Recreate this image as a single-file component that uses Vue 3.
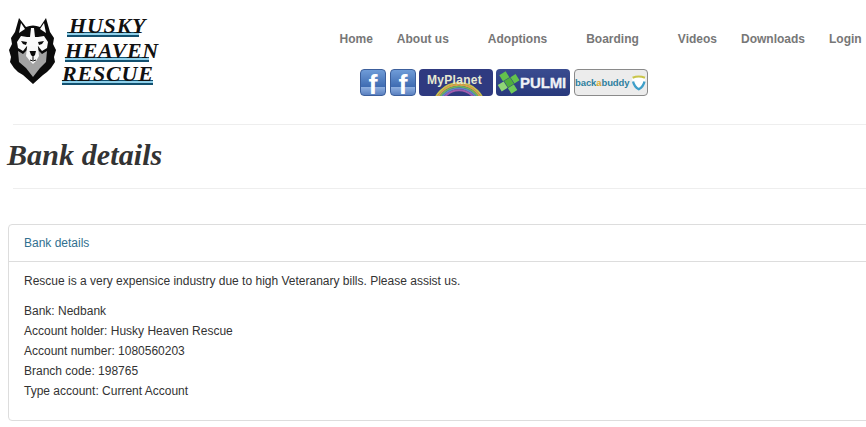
<script setup>
const navItems = [
  { label: 'Home' },
  { label: 'About us', sub: true },
  { label: 'Adoptions', sub: true },
  { label: 'Boarding', sub: true },
  { label: 'Videos' },
  { label: 'Downloads' },
  { label: 'Login' }
]

const details = [
  'Bank: Nedbank',
  'Account holder: Husky Heaven Rescue',
  'Account number: 1080560203',
  'Branch code: 198765',
  'Type account: Current Account'
]
</script>

<template>
  <div class="page">
    <header class="top">
      <div class="logo">
        <svg class="dog" width="60" height="90" viewBox="0 0 60 90">
          <path fill="#0b0b0b" d="M19 18 L26 27 Q33 24 40 27 L46 18 L50 32 L54 38 L53 44 L56 50 L54 57 L55 62 L51 68 L47 72 L43 75 L33 84 L23 75 L18 72 L14 68 L10 62 L11 57 L9 50 L12 44 L11 38 L15 32 Z" />
          <path fill="#fff" d="M21 23 L25 29 L19 33 Z M44 23 L40 29 L46 33 Z" />
          <path fill="#fafafa" d="M31 28 L34 28 L35 37 L38 37 L44 36 L48 42 L47 48 L42 51 L38 46 L37 52 L28 52 L27 46 L23 51 L18 48 L17 42 L21 36 L27 37 L30 37 Z" />
          <path fill="#a3a3a3" d="M18 51 L23 54 L27 50 L30 58 L33 62 L36 58 L38 50 L42 54 L47 51 L46 62 L40 68 L33 77 L26 68 L19 62 Z" />
          <path fill="#f8f8f8" d="M27 47 Q33 44 38 47 L39 56 L36 61 L33 64 L30 61 L26 56 Z" />
          <path fill="#0b0b0b" d="M21 41 L27 42 L26 45 L23 44 Z M44 41 L38 42 L39 45 L42 44 Z M29.5 51 L36 51 L35 55 L33 57 L31 55 Z" />
          <path fill="none" stroke="#0b0b0b" stroke-width="1" d="M33 57 V60 M30 60 Q33 62 36 60" />
        </svg>
        <div class="wordmark">
          <span class="word husky">HUSKY</span>
          <span class="word heaven">HEAVEN</span>
          <span class="word rescue">RESCUE</span>
        </div>
      </div>
      <div class="nav-col">
        <nav class="nav">
          <a v-for="item in navItems" :key="item.label" :class="{ sub: item.sub }">{{ item.label }}</a>
        </nav>
        <div class="badges">
          <span class="badge fb">f</span>
          <span class="badge fb">f</span>
          <span class="badge planet">
            <svg class="rainbow" width="74" height="27" viewBox="0 0 74 27">
              <g fill="none" stroke-width="1.9">
                <circle cx="40" cy="40" r="26" stroke="#c9c24e" />
                <circle cx="40" cy="40" r="24.2" stroke="#d8a24a" />
                <circle cx="40" cy="40" r="22.4" stroke="#6fb55a" />
                <circle cx="40" cy="40" r="20.6" stroke="#5f86c8" />
                <circle cx="40" cy="40" r="18.8" stroke="#a05cae" />
              </g>
            </svg>
            <span class="planet-text">MyPlanet</span>
          </span>
          <span class="badge pulmi">
            <svg width="23" height="23" viewBox="0 0 23 23">
              <g transform="rotate(-32 11.5 11.5)">
                <rect x="7.5" y="0.5" width="7.5" height="7" fill="#63c24c" />
                <rect x="1" y="8" width="7" height="7.5" fill="#8fd676" />
                <rect x="8.5" y="8" width="7" height="7.5" fill="#4fae3d" />
                <rect x="16" y="8" width="6" height="7.5" fill="#63c24c" />
                <rect x="8" y="16" width="7" height="6.5" fill="#6fca58" />
              </g>
            </svg>
            <span class="pulmi-text">PULMI</span>
          </span>
          <span class="badge buddy">
            <span class="buddy-text">back<i>a</i>buddy</span>
            <svg width="16" height="18" viewBox="0 0 15 17">
              <path fill="#fff" d="M1 3 Q7.5 0 14 3 Q14 12 7.5 15 Q1 12 1 3 Z" />
              <path fill="none" stroke="#3f9fc9" stroke-width="2.2" d="M2 7 Q3 12 7.5 14.5 Q12 12 13 7" />
              <path fill="none" stroke="#c9c54a" stroke-width="2" d="M1.5 3.5 Q7.5 1 13.5 3.5" />
            </svg>
          </span>
        </div>
      </div>
    </header>

    <section class="title-band">
      <h1>Bank details</h1>
    </section>

    <section class="panel">
      <div class="panel-heading">Bank details</div>
      <div class="panel-body">
        <p class="intro">Rescue is a very expensice industry due to high Veteranary bills. Please assist us.</p>
        <p v-for="line in details" :key="line">{{ line }}</p>
      </div>
    </section>
  </div>
</template>

<style>
html, body {
  margin: 0;
  background: #fff;
  overflow: hidden;
}
</style>

<style scoped>
.page {
  width: 866px;
  height: 427px;
  overflow: hidden;
  font-family: "Liberation Sans", Arial, sans-serif;
  font-size: 12px;
  color: #333;
}
.top {
  display: flex;
  height: 124px;
  margin-left: 13px;
  border-bottom: 1px solid #eee;
}
.logo {
  display: flex;
  flex: none;
  width: 327.5px;
  margin-left: -13px;
}
.dog {
  flex: none;
}
.wordmark {
  position: relative;
  flex: 1;
  font-family: "Liberation Serif", serif;
  font-style: italic;
  font-weight: bold;
  color: #111;
  font-size: 22px;
  line-height: 13px;
}
.word {
  position: absolute;
  height: 18px;
  background: linear-gradient(#12506f 0 1px, #8fd0ea 1px 3px, #12506f 3px 5px) no-repeat left bottom / 100% 5px;
  white-space: nowrap;
}
.husky {
  top: 19px;
  left: 7px;
  width: 70px;
  padding-left: 2px;
  letter-spacing: 0.8px;
}
.heaven {
  top: 44px;
  left: 5px;
  width: 84px;
  letter-spacing: 0.6px;
}
.rescue {
  top: 67px;
  left: 2px;
  width: 91px;
  letter-spacing: 0.8px;
}
.nav-col {
  flex: none;
  display: flex;
  flex-direction: column;
}
.nav {
  display: flex;
  padding-top: 32px;
  line-height: 14px;
  font-weight: bold;
  color: #777;
}
.nav a {
  padding: 0 12px;
  white-space: nowrap;
}
.nav a.sub {
  padding-right: 27px;
}
.badges {
  display: flex;
  align-items: stretch;
  gap: 3px;
  height: 27px;
  margin-top: 23px;
  margin-left: 32.5px;
}
.badge {
  box-sizing: border-box;
  display: flex;
  align-items: center;
  justify-content: center;
  position: relative;
  overflow: hidden;
  border-radius: 4px;
}
.fb {
  align-items: flex-start;
  overflow: visible;
  width: 26px;
  background: linear-gradient(#6f9cd8, #3f6cb2 66%, #8fb0e0 68%, #5a80c0);
  border: 1px solid #3c5f9c;
  color: #fff;
  font-weight: bold;
  font-size: 27px;
  line-height: 20px;
  padding-top: 5px;
}
.fb + .fb {
  margin-left: 1px;
}
.planet {
  justify-content: flex-start;
  width: 74px;
  background: #2f3a80;
}
.rainbow {
  position: absolute;
  left: 0;
  top: 0;
}
.planet-text {
  position: relative;
  margin: 0 0 5px 8px;
  color: #e6e8d2;
  font-weight: bold;
  font-size: 12px;
  letter-spacing: 0.3px;
}
.pulmi {
  justify-content: flex-start;
  width: 74px;
  padding-left: 1px;
  background: linear-gradient(#3a4c90, #28397c);
}
.pulmi-text {
  color: #eef1f6;
  font-weight: bold;
  font-size: 15px;
  letter-spacing: -0.1px;
  -webkit-text-stroke: 0.3px #eef1f6;
}
.buddy {
  width: 74px;
  margin-left: 1px;
  gap: 2px;
  background: #ececec;
  border: 1px solid #8a8a8a;
}
.buddy-text {
  color: #2e7f9e;
  font-weight: bold;
  font-size: 9.5px;
  letter-spacing: -0.1px;
}
.buddy-text i {
  font-style: normal;
  color: #d9a92e;
}
.title-band {
  display: flex;
  align-items: center;
  height: 63px;
  margin-left: 13px;
  border-bottom: 1px solid #eee;
}
h1 {
  margin: 0 0 3px -6px;
  font-family: "Liberation Serif", "Times New Roman", serif;
  font-style: italic;
  font-weight: bold;
  font-size: 30px;
  line-height: 36px;
  letter-spacing: 0.1px;
  color: #333;
}
.panel {
  margin: 35px -8px 0 8px;
  height: 195px;
  border: 1px solid #ddd;
  border-radius: 4px;
}
.panel-heading {
  height: 36px;
  line-height: 36px;
  padding-left: 15px;
  border-bottom: 1px solid #ddd;
  color: #31708f;
}
.panel-body {
  padding: 9px 15px 0;
}
.panel-body p {
  margin: 0;
  line-height: 20px;
}
.panel-body .intro {
  margin-bottom: 10px;
}
</style>
